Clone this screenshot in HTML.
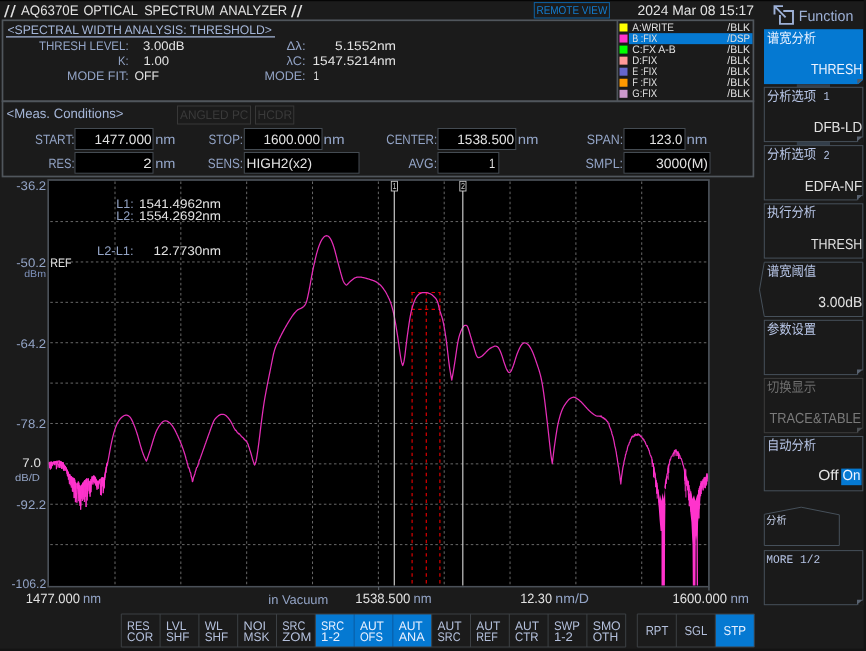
<!DOCTYPE html>
<html lang="zh">
<head>
<meta charset="utf-8">
<title>AQ6370E OPTICAL SPECTRUM ANALYZER</title>
<style>
html,body{margin:0;padding:0;background:#1b1b1b;}
body{width:866px;height:651px;overflow:hidden;position:relative;font-family:"Liberation Sans", "Noto Sans CJK SC", sans-serif;}
svg{position:absolute;left:0;top:0;display:block;filter:blur(0.35px);}
svg text{font-family:"Liberation Sans", "Noto Sans CJK SC", sans-serif;white-space:pre;}
</style>
</head>
<body>
<svg width="866" height="651" viewBox="0 0 866 651" text-rendering="geometricPrecision">
<rect x="0" y="0" width="866" height="651" fill="#1b1b1b"/>
<rect x="0.00" y="0.00" width="866.00" height="1.20" fill="#050505"/>
<rect x="863.70" y="0.00" width="2.30" height="651.00" fill="#141414"/>
<rect x="0.00" y="648.70" width="866.00" height="2.30" fill="#141414"/>
<g id="header">
<text x="21.00" y="14.55" font-size="13.83" fill="#e2e2e2" textLength="57.60" lengthAdjust="spacingAndGlyphs">AQ6370E</text>
<text x="83.50" y="14.55" font-size="13.83" fill="#e2e2e2" textLength="54.30" lengthAdjust="spacingAndGlyphs">OPTICAL</text>
<text x="144.20" y="14.55" font-size="13.83" fill="#e2e2e2" textLength="70.60" lengthAdjust="spacingAndGlyphs">SPECTRUM</text>
<text x="219.60" y="14.55" font-size="13.83" fill="#e2e2e2" textLength="67.60" lengthAdjust="spacingAndGlyphs">ANALYZER</text>
<text transform="translate(4.0,17.00) scale(1.45,1.2)" font-size="13.83" fill="#e2e2e2">/</text>
<text transform="translate(10.2,17.00) scale(1.45,1.2)" font-size="13.83" fill="#e2e2e2">/</text>
<text transform="translate(291.0,17.00) scale(1.45,1.2)" font-size="13.83" fill="#e2e2e2">/</text>
<text transform="translate(296.7,17.00) scale(1.45,1.2)" font-size="13.83" fill="#e2e2e2">/</text>
<rect x="534.30" y="2.60" width="75.10" height="15.40" fill="none" stroke="#0e62a4" stroke-width="1"/>
<text x="536.50" y="13.75" font-size="11.44" fill="#127ccf" textLength="70.80" lengthAdjust="spacingAndGlyphs">REMOTE VIEW</text>
<text x="637.50" y="14.55" font-size="13.83" fill="#e2e2e2" textLength="116.50" lengthAdjust="spacingAndGlyphs">2024 Mar 08 15:17</text>
</g>
<g id="analysis-panel">
<rect x="2.50" y="20.30" width="750.90" height="81.00" fill="none" stroke="#50565c" stroke-width="1.7"/>
<rect x="2.50" y="101.30" width="750.90" height="75.20" fill="none" stroke="#50565c" stroke-width="1.7"/>
<text x="7.50" y="33.55" font-size="12.48" fill="#a5b6d8" textLength="264.50" lengthAdjust="spacingAndGlyphs">&lt;SPECTRAL WIDTH ANALYSIS: THRESHOLD&gt;</text>
<line x1="6.00" y1="36.80" x2="275.00" y2="36.80" stroke="#a5b6d8" stroke-width="1.2"/>
<text x="39.00" y="49.55" font-size="12.48" fill="#93a4c6" textLength="89.60" lengthAdjust="spacingAndGlyphs">THRESH LEVEL:</text>
<text x="143.00" y="49.55" font-size="12.48" fill="#e2e2e2" textLength="41.50" lengthAdjust="spacingAndGlyphs">3.00dB</text>
<text x="118.00" y="64.55" font-size="12.48" fill="#93a4c6" textLength="10.60" lengthAdjust="spacingAndGlyphs">K:</text>
<text x="143.50" y="64.55" font-size="12.48" fill="#e2e2e2" textLength="25.50" lengthAdjust="spacingAndGlyphs">1.00</text>
<text x="67.00" y="79.55" font-size="12.48" fill="#93a4c6" textLength="61.60" lengthAdjust="spacingAndGlyphs">MODE FIT:</text>
<text x="134.50" y="79.55" font-size="12.48" fill="#e2e2e2" textLength="24.50" lengthAdjust="spacingAndGlyphs">OFF</text>
<text x="286.50" y="49.55" font-size="12.48" fill="#93a4c6" textLength="19.10" lengthAdjust="spacingAndGlyphs">Δλ:</text>
<text x="335.00" y="49.55" font-size="12.48" fill="#e2e2e2" textLength="61.00" lengthAdjust="spacingAndGlyphs">5.1552nm</text>
<text x="286.50" y="64.55" font-size="12.48" fill="#93a4c6" textLength="19.10" lengthAdjust="spacingAndGlyphs">λC:</text>
<text x="312.50" y="64.55" font-size="12.48" fill="#e2e2e2" textLength="83.50" lengthAdjust="spacingAndGlyphs">1547.5214nm</text>
<text x="264.50" y="79.55" font-size="12.48" fill="#93a4c6" textLength="41.10" lengthAdjust="spacingAndGlyphs">MODE:</text>
<text x="313.50" y="79.55" font-size="12.48" fill="#e2e2e2" textLength="5.50" lengthAdjust="spacingAndGlyphs">1</text>
</g>
<g id="trace-list">
<line x1="617.40" y1="20.30" x2="617.40" y2="101.30" stroke="#50565c" stroke-width="1.7"/>
<rect x="619.50" y="23.50" width="8.00" height="8.00" fill="#ffff00"/>
<text x="632.30" y="30.85" font-size="10.92" fill="#e2e2e2" textLength="41.60" lengthAdjust="spacingAndGlyphs">A:WRITE</text>
<text x="727.30" y="30.85" font-size="10.92" fill="#e2e2e2" textLength="22.70" lengthAdjust="spacingAndGlyphs">/BLK</text>
<rect x="629.00" y="33.15" width="123.50" height="11.00" fill="#0579d2"/>
<rect x="619.50" y="34.55" width="8.00" height="8.00" fill="#ff33cc"/>
<text x="632.30" y="41.90" font-size="10.92" fill="#e2e2e2" textLength="24.90" lengthAdjust="spacingAndGlyphs">B :FIX</text>
<text x="727.30" y="41.90" font-size="10.92" fill="#e2e2e2" textLength="22.70" lengthAdjust="spacingAndGlyphs">/DSP</text>
<rect x="619.50" y="45.60" width="8.00" height="8.00" fill="#00ff00"/>
<text x="632.30" y="52.95" font-size="10.92" fill="#e2e2e2" textLength="43.40" lengthAdjust="spacingAndGlyphs">C:FX A-B</text>
<text x="727.30" y="52.95" font-size="10.92" fill="#e2e2e2" textLength="22.70" lengthAdjust="spacingAndGlyphs">/BLK</text>
<rect x="619.50" y="56.65" width="8.00" height="8.00" fill="#ff9999"/>
<text x="632.30" y="64.00" font-size="10.92" fill="#e2e2e2" textLength="24.90" lengthAdjust="spacingAndGlyphs">D:FIX</text>
<text x="727.30" y="64.00" font-size="10.92" fill="#e2e2e2" textLength="22.70" lengthAdjust="spacingAndGlyphs">/BLK</text>
<rect x="619.50" y="67.70" width="8.00" height="8.00" fill="#6666cc"/>
<text x="632.30" y="75.05" font-size="10.92" fill="#e2e2e2" textLength="24.90" lengthAdjust="spacingAndGlyphs">E :FIX</text>
<text x="727.30" y="75.05" font-size="10.92" fill="#e2e2e2" textLength="22.70" lengthAdjust="spacingAndGlyphs">/BLK</text>
<rect x="619.50" y="78.75" width="8.00" height="8.00" fill="#ff9900"/>
<text x="632.30" y="86.10" font-size="10.92" fill="#e2e2e2" textLength="24.90" lengthAdjust="spacingAndGlyphs">F :FIX</text>
<text x="727.30" y="86.10" font-size="10.92" fill="#e2e2e2" textLength="22.70" lengthAdjust="spacingAndGlyphs">/BLK</text>
<rect x="619.50" y="89.80" width="8.00" height="8.00" fill="#cc99cc"/>
<text x="632.30" y="97.15" font-size="10.92" fill="#e2e2e2" textLength="24.90" lengthAdjust="spacingAndGlyphs">G:FIX</text>
<text x="727.30" y="97.15" font-size="10.92" fill="#e2e2e2" textLength="22.70" lengthAdjust="spacingAndGlyphs">/BLK</text>
</g>
<g id="meas-conditions">
<text x="6.50" y="118.05" font-size="13.52" fill="#a5b6d8" textLength="117.00" lengthAdjust="spacingAndGlyphs">&lt;Meas. Conditions&gt;</text>
<rect x="177.50" y="106.00" width="73.00" height="18.00" fill="none" stroke="#383838" stroke-width="1"/>
<text x="180.00" y="118.95" font-size="12.48" fill="#3a3a3a" textLength="68.30" lengthAdjust="spacingAndGlyphs">ANGLED PC</text>
<rect x="255.50" y="106.00" width="38.30" height="18.00" fill="none" stroke="#383838" stroke-width="1"/>
<text x="257.50" y="118.95" font-size="12.48" fill="#3a3a3a" textLength="34.70" lengthAdjust="spacingAndGlyphs">HCDR</text>
<text x="35.00" y="144.05" font-size="13.52" fill="#93a4c6" textLength="39.60" lengthAdjust="spacingAndGlyphs">START:</text>
<rect x="75.00" y="128.50" width="78.00" height="21.00" fill="#000" stroke="#444b52" stroke-width="1"/>
<text x="94.60" y="144.05" font-size="13.52" fill="#e2e2e2" textLength="57.00" lengthAdjust="spacingAndGlyphs">1477.000</text>
<text x="155.20" y="144.05" font-size="13.52" fill="#93a4c6" textLength="20.20" lengthAdjust="spacingAndGlyphs">nm</text>
<text x="48.50" y="167.75" font-size="13.52" fill="#93a4c6" textLength="26.10" lengthAdjust="spacingAndGlyphs">RES:</text>
<rect x="75.00" y="152.50" width="78.00" height="20.70" fill="#000" stroke="#444b52" stroke-width="1"/>
<text x="143.20" y="167.75" font-size="13.52" fill="#e2e2e2" textLength="8.40" lengthAdjust="spacingAndGlyphs">2</text>
<text x="155.20" y="167.75" font-size="13.52" fill="#93a4c6" textLength="20.20" lengthAdjust="spacingAndGlyphs">nm</text>
<text x="208.50" y="144.05" font-size="13.52" fill="#93a4c6" textLength="34.60" lengthAdjust="spacingAndGlyphs">STOP:</text>
<rect x="244.30" y="128.50" width="77.70" height="21.00" fill="#000" stroke="#444b52" stroke-width="1"/>
<text x="263.40" y="144.05" font-size="13.52" fill="#e2e2e2" textLength="56.60" lengthAdjust="spacingAndGlyphs">1600.000</text>
<text x="323.50" y="144.05" font-size="13.52" fill="#93a4c6" textLength="21.10" lengthAdjust="spacingAndGlyphs">nm</text>
<text x="207.80" y="167.75" font-size="13.52" fill="#93a4c6" textLength="35.30" lengthAdjust="spacingAndGlyphs">SENS:</text>
<rect x="244.30" y="152.50" width="114.70" height="20.70" fill="#000" stroke="#444b52" stroke-width="1"/>
<text x="246.60" y="167.75" font-size="13.52" fill="#e2e2e2" textLength="65.40" lengthAdjust="spacingAndGlyphs">HIGH2(x2)</text>
<text x="386.30" y="144.05" font-size="13.52" fill="#93a4c6" textLength="50.80" lengthAdjust="spacingAndGlyphs">CENTER:</text>
<rect x="438.00" y="128.50" width="77.80" height="21.00" fill="#000" stroke="#444b52" stroke-width="1"/>
<text x="457.20" y="144.05" font-size="13.52" fill="#e2e2e2" textLength="57.00" lengthAdjust="spacingAndGlyphs">1538.500</text>
<text x="517.70" y="144.05" font-size="13.52" fill="#93a4c6" textLength="20.70" lengthAdjust="spacingAndGlyphs">nm</text>
<text x="408.50" y="167.75" font-size="13.52" fill="#93a4c6" textLength="28.60" lengthAdjust="spacingAndGlyphs">AVG:</text>
<rect x="438.00" y="152.50" width="60.80" height="20.70" fill="#000" stroke="#444b52" stroke-width="1"/>
<text x="489.00" y="167.75" font-size="13.52" fill="#e2e2e2" textLength="6.20" lengthAdjust="spacingAndGlyphs">1</text>
<text x="586.80" y="144.05" font-size="13.52" fill="#93a4c6" textLength="36.30" lengthAdjust="spacingAndGlyphs">SPAN:</text>
<rect x="624.00" y="128.50" width="61.00" height="21.00" fill="#000" stroke="#444b52" stroke-width="1"/>
<text x="649.20" y="144.05" font-size="13.52" fill="#e2e2e2" textLength="33.30" lengthAdjust="spacingAndGlyphs">123.0</text>
<text x="686.50" y="144.05" font-size="13.52" fill="#93a4c6" textLength="20.90" lengthAdjust="spacingAndGlyphs">nm</text>
<text x="585.50" y="167.75" font-size="13.52" fill="#93a4c6" textLength="37.60" lengthAdjust="spacingAndGlyphs">SMPL:</text>
<rect x="624.00" y="152.50" width="86.00" height="20.70" fill="#000" stroke="#444b52" stroke-width="1"/>
<text x="656.00" y="167.75" font-size="13.52" fill="#e2e2e2" textLength="52.00" lengthAdjust="spacingAndGlyphs">3000(M)</text>
</g>
<g id="chart">
<rect x="48.20" y="180.00" width="660.70" height="406.60" fill="#000" stroke="#4a5058" stroke-width="1.7"/>
<rect x="49.00" y="181.00" width="659.00" height="404.60" fill="#000"/>
<line x1="115.00" y1="181.50" x2="115.00" y2="585.10" stroke="#747474" stroke-width="0.9" stroke-dasharray="2.533 2.533"/>
<line x1="180.84" y1="181.50" x2="180.84" y2="585.10" stroke="#747474" stroke-width="0.9" stroke-dasharray="2.533 2.533"/>
<line x1="246.68" y1="181.50" x2="246.68" y2="585.10" stroke="#747474" stroke-width="0.9" stroke-dasharray="2.533 2.533"/>
<line x1="312.52" y1="181.50" x2="312.52" y2="585.10" stroke="#747474" stroke-width="0.9" stroke-dasharray="2.533 2.533"/>
<line x1="378.36" y1="181.50" x2="378.36" y2="585.10" stroke="#747474" stroke-width="0.9" stroke-dasharray="2.533 2.533"/>
<line x1="444.20" y1="181.50" x2="444.20" y2="585.10" stroke="#747474" stroke-width="0.9" stroke-dasharray="2.533 2.533"/>
<line x1="510.04" y1="181.50" x2="510.04" y2="585.10" stroke="#747474" stroke-width="0.9" stroke-dasharray="2.533 2.533"/>
<line x1="575.88" y1="181.50" x2="575.88" y2="585.10" stroke="#747474" stroke-width="0.9" stroke-dasharray="2.533 2.533"/>
<line x1="641.72" y1="181.50" x2="641.72" y2="585.10" stroke="#747474" stroke-width="0.9" stroke-dasharray="2.533 2.533"/>
<line x1="50.30" y1="221.58" x2="706.40" y2="221.58" stroke="#747474" stroke-width="0.9" stroke-dasharray="2.533 2.533"/>
<line x1="50.30" y1="261.96" x2="706.40" y2="261.96" stroke="#747474" stroke-width="0.9" stroke-dasharray="2.533 2.533"/>
<line x1="50.30" y1="302.34" x2="706.40" y2="302.34" stroke="#747474" stroke-width="0.9" stroke-dasharray="2.533 2.533"/>
<line x1="50.30" y1="342.72" x2="706.40" y2="342.72" stroke="#747474" stroke-width="0.9" stroke-dasharray="2.533 2.533"/>
<line x1="50.30" y1="383.10" x2="706.40" y2="383.10" stroke="#747474" stroke-width="0.9" stroke-dasharray="2.533 2.533"/>
<line x1="50.30" y1="423.48" x2="706.40" y2="423.48" stroke="#747474" stroke-width="0.9" stroke-dasharray="2.533 2.533"/>
<line x1="50.30" y1="463.86" x2="706.40" y2="463.86" stroke="#747474" stroke-width="0.9" stroke-dasharray="2.533 2.533"/>
<line x1="50.30" y1="504.24" x2="706.40" y2="504.24" stroke="#747474" stroke-width="0.9" stroke-dasharray="2.533 2.533"/>
<line x1="50.30" y1="544.62" x2="706.40" y2="544.62" stroke="#747474" stroke-width="0.9" stroke-dasharray="2.533 2.533"/>
<text x="16.20" y="190.35" font-size="12.48" fill="#93a4c6" textLength="30.00" lengthAdjust="spacingAndGlyphs">-36.2</text>
<text x="16.20" y="266.65" font-size="12.48" fill="#93a4c6" textLength="30.00" lengthAdjust="spacingAndGlyphs">-50.2</text>
<text x="16.20" y="347.65" font-size="12.48" fill="#93a4c6" textLength="30.00" lengthAdjust="spacingAndGlyphs">-64.2</text>
<text x="16.20" y="427.65" font-size="12.48" fill="#93a4c6" textLength="30.00" lengthAdjust="spacingAndGlyphs">-78.2</text>
<text x="16.20" y="508.85" font-size="12.48" fill="#93a4c6" textLength="30.00" lengthAdjust="spacingAndGlyphs">-92.2</text>
<text x="11.50" y="587.55" font-size="12.48" fill="#93a4c6" textLength="34.70" lengthAdjust="spacingAndGlyphs">-106.2</text>
<text x="24.20" y="277.25" font-size="9.88" fill="#7f93bd" textLength="21.80" lengthAdjust="spacingAndGlyphs">dBm</text>
<text x="22.30" y="467.45" font-size="12.48" fill="#e2e2e2" textLength="18.50" lengthAdjust="spacingAndGlyphs">7.0</text>
<text x="15.00" y="480.65" font-size="10.19" fill="#93a4c6" textLength="25.00" lengthAdjust="spacingAndGlyphs">dB/D</text>
<text x="50.30" y="266.65" font-size="12.48" fill="#e2e2e2" textLength="21.30" lengthAdjust="spacingAndGlyphs">REF</text>
<text x="25.70" y="603.45" font-size="13.52" fill="#e2e2e2" textLength="54.30" lengthAdjust="spacingAndGlyphs">1477.000</text>
<text x="83.00" y="603.45" font-size="13.52" fill="#93a4c6" textLength="18.00" lengthAdjust="spacingAndGlyphs">nm</text>
<text x="268.30" y="603.65" font-size="12.90" fill="#93a4c6" textLength="60.00" lengthAdjust="spacingAndGlyphs">in Vacuum</text>
<text x="355.30" y="603.45" font-size="13.52" fill="#e2e2e2" textLength="55.00" lengthAdjust="spacingAndGlyphs">1538.500</text>
<text x="413.50" y="603.45" font-size="13.52" fill="#93a4c6" textLength="18.10" lengthAdjust="spacingAndGlyphs">nm</text>
<text x="520.20" y="603.45" font-size="13.52" fill="#e2e2e2" textLength="31.80" lengthAdjust="spacingAndGlyphs">12.30</text>
<text x="555.30" y="603.45" font-size="13.52" fill="#93a4c6" textLength="33.70" lengthAdjust="spacingAndGlyphs">nm/D</text>
<text x="672.50" y="603.45" font-size="13.52" fill="#e2e2e2" textLength="54.50" lengthAdjust="spacingAndGlyphs">1600.000</text>
<text x="730.40" y="603.45" font-size="13.52" fill="#93a4c6" textLength="18.60" lengthAdjust="spacingAndGlyphs">nm</text>
<line x1="378.60" y1="587.00" x2="378.60" y2="590.00" stroke="#5a6068" stroke-width="1.2"/>
<line x1="708.90" y1="587.00" x2="708.90" y2="590.50" stroke="#4a5058" stroke-width="1.7"/>
<text x="116.30" y="208.45" font-size="12.48" fill="#93a4c6" textLength="17.30" lengthAdjust="spacingAndGlyphs">L1:</text>
<text x="139.00" y="208.45" font-size="12.48" fill="#e2e2e2" textLength="82.00" lengthAdjust="spacingAndGlyphs">1541.4962nm</text>
<text x="116.30" y="220.25" font-size="12.48" fill="#93a4c6" textLength="17.30" lengthAdjust="spacingAndGlyphs">L2:</text>
<text x="139.00" y="220.25" font-size="12.48" fill="#e2e2e2" textLength="82.00" lengthAdjust="spacingAndGlyphs">1554.2692nm</text>
<text x="97.00" y="255.45" font-size="12.48" fill="#93a4c6" textLength="36.60" lengthAdjust="spacingAndGlyphs">L2-L1:</text>
<text x="153.50" y="255.45" font-size="12.48" fill="#e2e2e2" textLength="67.50" lengthAdjust="spacingAndGlyphs">12.7730nm</text>
<line x1="412.10" y1="291.90" x2="412.10" y2="585.60" stroke="#dc0000" stroke-width="1.2" stroke-dasharray="3.4 3.3"/>
<line x1="426.30" y1="291.90" x2="426.30" y2="585.60" stroke="#dc0000" stroke-width="1.2" stroke-dasharray="3.4 3.3"/>
<line x1="439.90" y1="291.90" x2="439.90" y2="585.60" stroke="#dc0000" stroke-width="1.2" stroke-dasharray="3.4 3.3"/>
<line x1="411.50" y1="292.50" x2="440.50" y2="292.50" stroke="#dc0000" stroke-width="1.2" stroke-dasharray="3.4 3.3"/>
<line x1="411.50" y1="309.40" x2="440.50" y2="309.40" stroke="#dc0000" stroke-width="1.2" stroke-dasharray="3.4 3.3"/>
<path d="M107.2,465.3 L107.6,463.2 L108.0,461.1 L108.4,459.0 L108.8,456.8 L109.2,454.6 L109.6,452.4 L110.0,450.2 L110.4,448.1 L110.8,446.0 L111.2,444.0 L111.6,442.1 L112.0,440.3 L112.4,438.6 L112.8,436.9 L113.2,435.3 L113.6,433.8 L114.0,432.4 L114.4,431.1 L114.8,429.8 L115.2,428.6 L115.6,427.5 L116.0,426.4 L116.4,425.5 L116.8,424.5 L117.2,423.7 L117.6,422.9 L118.0,422.1 L118.4,421.5 L118.8,420.8 L119.2,420.2 L119.6,419.7 L120.0,419.2 L120.4,418.7 L120.8,418.2 L121.2,417.8 L121.6,417.4 L122.0,417.1 L122.4,416.7 L122.8,416.4 L123.2,416.2 L123.6,415.9 L124.0,415.7 L124.4,415.5 L124.8,415.4 L125.2,415.3 L125.6,415.2 L126.0,415.2 L126.4,415.2 L126.8,415.2 L127.2,415.3 L127.6,415.4 L128.0,415.6 L128.4,415.8 L128.8,416.1 L129.2,416.4 L129.6,416.7 L130.0,417.2 L130.4,417.7 L130.8,418.2 L131.2,418.9 L131.6,419.6 L132.0,420.4 L132.4,421.2 L132.8,422.1 L133.2,423.0 L133.6,424.0 L134.0,424.9 L134.4,426.0 L134.8,427.0 L135.2,428.1 L135.6,429.2 L136.0,430.4 L136.4,431.6 L136.8,432.8 L137.2,434.0 L137.6,435.3 L138.0,436.7 L138.4,438.1 L138.8,439.5 L139.2,440.9 L139.6,442.4 L140.0,443.8 L140.4,445.3 L140.8,446.7 L141.2,448.0 L141.6,449.3 L142.0,450.6 L142.4,451.8 L142.8,452.9 L143.2,454.0 L143.6,455.1 L144.0,456.1 L144.4,457.0 L144.8,457.9 L145.2,458.8 L145.6,459.6 L146.0,460.4 L146.4,461.2 L146.8,460.1 L147.2,459.0 L147.6,457.8 L148.0,456.6 L148.4,455.5 L148.8,454.3 L149.2,453.1 L149.6,451.9 L150.0,450.7 L150.4,449.4 L150.8,448.2 L151.2,446.8 L151.6,445.5 L152.0,444.2 L152.4,442.9 L152.8,441.5 L153.2,440.2 L153.6,438.9 L154.0,437.7 L154.4,436.4 L154.8,435.2 L155.2,434.1 L155.6,433.0 L156.0,432.0 L156.4,431.1 L156.8,430.2 L157.2,429.4 L157.6,428.7 L158.0,427.9 L158.4,427.3 L158.8,426.6 L159.2,426.0 L159.6,425.4 L160.0,424.9 L160.4,424.3 L160.8,423.8 L161.2,423.3 L161.6,422.9 L162.0,422.5 L162.4,422.1 L162.8,421.8 L163.2,421.5 L163.6,421.3 L164.0,421.1 L164.4,421.0 L164.8,420.9 L165.2,420.8 L165.6,420.8 L166.0,420.9 L166.4,421.0 L166.8,421.1 L167.2,421.2 L167.6,421.4 L168.0,421.6 L168.4,421.9 L168.8,422.2 L169.2,422.5 L169.6,422.8 L170.0,423.1 L170.4,423.5 L170.8,424.0 L171.2,424.4 L171.6,424.9 L172.0,425.4 L172.4,426.0 L172.8,426.5 L173.2,427.1 L173.6,427.8 L174.0,428.4 L174.4,429.1 L174.8,429.8 L175.2,430.6 L175.6,431.4 L176.0,432.2 L176.4,433.1 L176.8,433.9 L177.2,434.8 L177.6,435.6 L178.0,436.5 L178.4,437.4 L178.8,438.3 L179.2,439.3 L179.6,440.2 L180.0,441.1 L180.4,442.1 L180.8,443.1 L181.2,444.1 L181.6,445.1 L182.0,446.1 L182.4,447.2 L182.8,448.3 L183.2,449.4 L183.6,450.6 L184.0,451.8 L184.4,453.0 L184.8,454.2 L185.2,455.6 L185.6,457.0 L186.0,458.7 L186.4,459.9 L186.8,460.9 L187.2,463.3 L187.6,464.3 L188.0,465.9 L188.4,467.8 L188.8,467.6 L189.2,468.3 L189.6,470.0 L190.0,471.9 L190.4,472.2 L190.8,473.4 L191.2,476.3 L191.6,477.4 L192.0,478.8 L192.4,481.6 L192.6,481.5 L193.0,480.4 L193.4,477.8 L193.8,476.7 L194.2,475.9 L194.6,474.8 L195.0,473.4 L195.4,471.3 L195.8,470.6 L196.2,469.0 L196.6,467.6 L197.0,467.3 L197.4,466.9 L197.8,465.8 L198.2,464.4 L198.6,463.8 L199.0,461.3 L199.4,460.0 L199.8,459.4 L200.2,458.4 L200.6,457.3 L201.0,456.1 L201.4,455.0 L201.8,453.9 L202.2,452.8 L202.6,451.6 L203.0,450.5 L203.4,449.4 L203.8,448.3 L204.2,447.2 L204.6,446.0 L205.0,444.9 L205.4,443.8 L205.8,442.7 L206.2,441.5 L206.6,440.4 L207.0,439.3 L207.4,438.2 L207.8,437.0 L208.2,435.9 L208.6,434.8 L209.0,433.7 L209.4,432.6 L209.8,431.5 L210.2,430.3 L210.6,429.2 L211.0,428.1 L211.4,427.1 L211.8,426.0 L212.2,424.9 L212.6,423.8 L213.0,422.8 L213.4,421.9 L213.8,421.0 L214.2,420.3 L214.6,419.7 L215.0,419.1 L215.4,418.6 L215.8,418.2 L216.2,417.8 L216.6,417.4 L217.0,417.0 L217.4,416.6 L217.8,416.3 L218.2,415.9 L218.6,415.6 L219.0,415.4 L219.4,415.1 L219.8,414.9 L220.2,414.7 L220.6,414.6 L221.0,414.4 L221.4,414.4 L221.8,414.3 L222.2,414.3 L222.6,414.3 L223.0,414.3 L223.4,414.4 L223.8,414.5 L224.2,414.6 L224.6,414.8 L225.0,415.0 L225.4,415.2 L225.8,415.5 L226.2,415.8 L226.6,416.2 L227.0,416.6 L227.4,417.0 L227.8,417.4 L228.2,417.9 L228.6,418.4 L229.0,418.9 L229.4,419.5 L229.8,420.0 L230.2,420.6 L230.6,421.2 L231.0,421.9 L231.4,422.6 L231.8,423.3 L232.2,424.2 L232.6,425.0 L233.0,425.8 L233.4,426.7 L233.8,427.5 L234.2,428.2 L234.6,428.9 L235.0,429.4 L235.4,430.4 L235.8,430.2 L236.2,430.6 L236.6,431.4 L237.0,432.0 L237.4,432.5 L237.8,432.8 L238.2,433.4 L238.6,433.4 L239.0,434.2 L239.4,433.8 L239.8,434.3 L240.2,435.0 L240.6,435.2 L241.0,436.0 L241.4,436.3 L241.8,436.6 L242.2,437.3 L242.6,437.5 L243.0,437.6 L243.4,438.1 L243.8,438.9 L244.2,439.4 L244.6,439.1 L245.0,440.2 L245.4,440.7 L245.8,440.6 L246.2,441.1 L246.6,441.2 L247.0,442.2 L247.4,442.9 L247.8,443.9 L248.2,444.4 L248.6,446.4 L249.0,447.1 L249.4,448.2 L249.8,449.9 L250.2,450.9 L250.6,452.1 L251.0,453.5 L251.4,455.0 L251.8,456.4 L252.2,457.9 L252.6,459.3 L253.0,460.6 L253.4,461.8 L253.8,462.9 L254.2,464.0 L254.6,465.0 L255.0,464.2 L255.4,463.2 L255.8,462.0 L256.2,460.4 L256.6,458.3 L257.0,455.8 L257.4,453.2 L257.8,450.5 L258.2,447.6 L258.6,444.6 L259.0,441.5 L259.4,438.3 L259.8,435.0 L260.2,431.7 L260.6,428.4 L261.0,425.1 L261.4,421.9 L261.8,418.8 L262.2,415.8 L262.6,412.8 L263.0,410.0 L263.4,407.2 L263.8,404.5 L264.2,401.9 L264.6,399.5 L265.0,397.2 L265.4,395.0 L265.8,392.8 L266.2,390.7 L266.6,388.6 L267.0,386.5 L267.4,384.4 L267.8,382.4 L268.2,380.4 L268.6,378.4 L269.0,376.4 L269.4,374.4 L269.8,372.5 L270.2,370.5 L270.6,368.5 L271.0,366.5 L271.4,364.4 L271.8,362.4 L272.2,360.3 L272.6,358.3 L273.0,356.3 L273.4,354.5 L273.8,352.8 L274.2,351.3 L274.6,349.9 L275.0,348.7 L275.4,347.5 L275.8,346.5 L276.2,345.5 L276.6,344.6 L277.0,343.8 L277.4,342.9 L277.8,342.1 L278.2,341.2 L278.6,340.4 L279.0,339.6 L279.4,338.7 L279.8,337.9 L280.2,337.1 L280.6,336.3 L281.0,335.5 L281.4,334.7 L281.8,333.9 L282.2,333.1 L282.6,332.4 L283.0,331.6 L283.4,330.9 L283.8,330.1 L284.2,329.4 L284.6,328.7 L285.0,328.0 L285.4,327.3 L285.8,326.6 L286.2,325.9 L286.6,325.2 L287.0,324.5 L287.4,323.8 L287.8,323.2 L288.2,322.5 L288.6,321.8 L289.0,321.2 L289.4,320.5 L289.8,319.9 L290.2,319.2 L290.6,318.6 L291.0,318.0 L291.4,317.4 L291.8,316.7 L292.2,316.2 L292.6,315.6 L293.0,315.0 L293.4,314.5 L293.8,314.0 L294.2,313.5 L294.6,313.0 L295.0,312.5 L295.4,312.1 L295.8,311.6 L296.2,311.2 L296.6,310.8 L297.0,310.5 L297.4,310.1 L297.8,309.8 L298.2,309.6 L298.6,309.4 L299.0,309.2 L299.4,309.0 L299.8,308.8 L300.2,308.7 L300.6,308.5 L301.0,308.3 L301.4,308.1 L301.8,307.9 L302.2,307.6 L302.6,307.4 L303.0,307.1 L303.4,306.7 L303.8,306.4 L304.2,305.9 L304.6,305.5 L305.0,304.9 L305.4,304.3 L305.8,303.5 L306.2,302.5 L306.6,301.3 L307.0,299.9 L307.4,298.3 L307.8,296.6 L308.2,294.7 L308.6,292.8 L309.0,290.8 L309.4,288.7 L309.8,286.5 L310.2,284.3 L310.6,282.0 L311.0,279.8 L311.4,277.6 L311.8,275.4 L312.2,273.4 L312.6,271.4 L313.0,269.5 L313.4,267.6 L313.8,265.7 L314.2,263.9 L314.6,262.1 L315.0,260.3 L315.4,258.6 L315.8,256.9 L316.2,255.3 L316.6,253.7 L317.0,252.3 L317.4,250.9 L317.8,249.6 L318.2,248.3 L318.6,247.1 L319.0,246.0 L319.4,244.9 L319.8,243.9 L320.2,243.0 L320.6,242.1 L321.0,241.3 L321.4,240.5 L321.8,239.8 L322.2,239.2 L322.6,238.6 L323.0,238.1 L323.4,237.6 L323.8,237.1 L324.2,236.8 L324.6,236.4 L325.0,236.2 L325.4,236.0 L325.8,235.8 L326.2,235.8 L326.6,235.7 L327.0,235.8 L327.4,235.9 L327.8,236.0 L328.2,236.2 L328.6,236.5 L329.0,236.8 L329.4,237.3 L329.8,237.8 L330.2,238.4 L330.6,239.0 L331.0,239.8 L331.4,240.6 L331.8,241.5 L332.2,242.5 L332.6,243.5 L333.0,244.5 L333.4,245.7 L333.8,246.9 L334.2,248.2 L334.6,249.6 L335.0,251.0 L335.4,252.6 L335.8,254.1 L336.2,255.6 L336.6,257.2 L337.0,258.8 L337.4,260.3 L337.8,261.9 L338.2,263.4 L338.6,264.9 L339.0,266.4 L339.4,267.9 L339.8,269.4 L340.2,270.9 L340.6,272.3 L341.0,273.8 L341.4,275.2 L341.8,276.6 L342.2,278.0 L342.6,279.3 L343.0,280.4 L343.4,281.3 L343.8,282.1 L344.2,282.8 L344.6,283.4 L345.0,283.9 L345.4,284.4 L345.8,284.8 L346.2,285.0 L346.6,285.0 L347.0,284.7 L347.4,284.4 L347.8,284.0 L348.2,283.5 L348.6,283.1 L349.0,282.7 L349.4,282.2 L349.8,281.9 L350.2,281.5 L350.6,281.2 L351.0,280.8 L351.4,280.5 L351.8,280.2 L352.2,279.8 L352.6,279.5 L353.0,279.2 L353.4,278.9 L353.8,278.6 L354.2,278.3 L354.6,278.1 L355.0,277.9 L355.4,277.7 L355.8,277.5 L356.2,277.4 L356.6,277.3 L357.0,277.2 L357.4,277.1 L357.8,277.0 L358.2,277.0 L358.6,277.0 L359.0,277.0 L359.4,277.0 L359.8,277.0 L360.2,277.0 L360.6,277.1 L361.0,277.2 L361.4,277.2 L361.8,277.3 L362.2,277.4 L362.6,277.5 L363.0,277.6 L363.4,277.7 L363.8,277.7 L364.2,277.8 L364.6,277.9 L365.0,278.0 L365.4,278.1 L365.8,278.2 L366.2,278.3 L366.6,278.4 L367.0,278.6 L367.4,278.7 L367.8,278.8 L368.2,278.9 L368.6,279.0 L369.0,279.1 L369.4,279.3 L369.8,279.4 L370.2,279.5 L370.6,279.7 L371.0,279.8 L371.4,279.9 L371.8,280.1 L372.2,280.2 L372.6,280.3 L373.0,280.5 L373.4,280.6 L373.8,280.8 L374.2,280.9 L374.6,281.1 L375.0,281.3 L375.4,281.4 L375.8,281.7 L376.2,281.9 L376.6,282.1 L377.0,282.4 L377.4,282.7 L377.8,283.0 L378.2,283.3 L378.6,283.6 L379.0,283.9 L379.4,284.2 L379.8,284.6 L380.2,284.9 L380.6,285.3 L381.0,285.7 L381.4,286.1 L381.8,286.6 L382.2,287.1 L382.6,287.6 L383.0,288.1 L383.4,288.7 L383.8,289.3 L384.2,289.8 L384.6,290.4 L385.0,291.0 L385.4,291.6 L385.8,292.3 L386.2,293.0 L386.6,293.7 L387.0,294.5 L387.4,295.2 L387.8,296.1 L388.2,296.9 L388.6,297.8 L389.0,298.6 L389.4,299.5 L389.8,300.5 L390.2,301.4 L390.6,302.5 L391.0,303.6 L391.4,304.9 L391.8,306.2 L392.2,307.6 L392.6,309.1 L393.0,310.7 L393.4,312.4 L393.8,314.2 L394.2,316.1 L394.6,318.1 L395.0,320.3 L395.4,322.6 L395.8,324.9 L396.2,327.4 L396.6,329.8 L397.0,332.3 L397.4,334.9 L397.8,337.4 L398.2,340.1 L398.6,342.9 L399.0,345.8 L399.4,348.7 L399.8,351.6 L400.2,354.4 L400.6,357.0 L401.0,359.3 L401.4,361.3 L401.8,362.9 L402.2,364.2 L402.6,365.3 L402.7,365.6 L403.1,364.6 L403.5,363.3 L403.9,361.7 L404.3,359.6 L404.7,356.9 L405.1,353.8 L405.5,350.5 L405.9,347.1 L406.3,343.8 L406.7,340.6 L407.1,337.6 L407.5,334.7 L407.9,331.8 L408.3,328.9 L408.7,326.1 L409.1,323.4 L409.5,320.8 L409.9,318.4 L410.3,316.1 L410.7,314.0 L411.1,312.1 L411.5,310.4 L411.9,308.8 L412.3,307.3 L412.7,306.0 L413.1,304.7 L413.5,303.6 L413.9,302.5 L414.3,301.5 L414.7,300.5 L415.1,299.6 L415.5,298.7 L415.9,297.9 L416.3,297.3 L416.7,296.7 L417.1,296.2 L417.5,295.7 L417.9,295.2 L418.3,294.8 L418.7,294.4 L419.1,294.1 L419.5,293.8 L419.9,293.6 L420.3,293.4 L420.7,293.3 L421.1,293.1 L421.5,292.9 L421.9,292.8 L422.3,292.7 L422.7,292.6 L423.1,292.5 L423.5,292.5 L423.9,292.5 L424.3,292.5 L424.7,292.5 L425.1,292.5 L425.5,292.6 L425.9,292.6 L426.3,292.7 L426.7,292.7 L427.1,292.8 L427.5,292.9 L427.9,293.0 L428.3,293.1 L428.7,293.2 L429.1,293.4 L429.5,293.5 L429.9,293.7 L430.3,293.8 L430.7,294.0 L431.1,294.2 L431.5,294.5 L431.9,294.8 L432.3,295.1 L432.7,295.5 L433.1,295.8 L433.5,296.2 L433.9,296.6 L434.3,297.0 L434.7,297.4 L435.1,297.8 L435.5,298.2 L435.9,298.7 L436.3,299.3 L436.7,300.0 L437.1,300.8 L437.5,301.7 L437.9,302.8 L438.3,304.3 L438.7,306.0 L439.1,307.8 L439.5,309.4 L439.9,310.8 L440.3,312.1 L440.7,313.3 L441.1,314.5 L441.5,315.8 L441.9,317.0 L442.3,318.4 L442.7,319.9 L443.1,321.6 L443.5,323.4 L443.9,325.5 L444.3,327.7 L444.7,330.0 L445.1,332.5 L445.5,335.1 L445.9,337.7 L446.3,340.5 L446.7,343.6 L447.1,346.9 L447.5,350.3 L447.9,353.8 L448.3,357.3 L448.7,360.7 L449.1,363.9 L449.5,366.8 L449.9,369.5 L450.3,372.0 L450.7,374.4 L451.1,376.6 L451.5,378.7 L451.8,380.1 L452.2,377.9 L452.6,375.6 L453.0,373.3 L453.4,371.0 L453.8,368.6 L454.2,366.2 L454.6,363.7 L455.0,361.0 L455.4,358.3 L455.8,355.5 L456.2,352.8 L456.6,350.0 L457.0,347.4 L457.4,344.9 L457.8,342.6 L458.2,340.5 L458.6,338.7 L459.0,337.0 L459.4,335.6 L459.8,334.3 L460.2,333.2 L460.6,332.1 L461.0,331.1 L461.4,330.2 L461.8,329.3 L462.2,328.5 L462.6,327.8 L463.0,327.1 L463.4,326.6 L463.8,326.1 L464.2,325.8 L464.6,325.5 L465.0,325.3 L465.4,325.3 L465.8,325.3 L466.2,325.3 L466.6,325.5 L467.0,325.9 L467.4,326.4 L467.8,327.2 L468.2,328.2 L468.6,329.5 L469.0,330.8 L469.4,332.2 L469.8,333.5 L470.2,334.9 L470.6,336.3 L471.0,337.7 L471.4,339.0 L471.8,340.4 L472.2,341.7 L472.6,343.1 L473.0,344.4 L473.4,345.7 L473.8,347.0 L474.2,348.4 L474.6,349.7 L475.0,350.9 L475.4,352.2 L475.8,353.5 L476.2,354.7 L476.6,355.7 L477.0,356.4 L477.4,357.0 L477.8,357.4 L478.2,357.6 L478.6,357.7 L479.0,357.6 L479.4,357.5 L479.8,357.3 L480.2,357.1 L480.6,356.9 L481.0,356.7 L481.4,356.5 L481.8,356.2 L482.2,355.9 L482.6,355.6 L483.0,355.2 L483.4,354.8 L483.8,354.4 L484.2,354.0 L484.6,353.6 L485.0,353.2 L485.4,352.8 L485.8,352.4 L486.2,351.9 L486.6,351.5 L487.0,351.1 L487.4,350.7 L487.8,350.3 L488.2,349.9 L488.6,349.6 L489.0,349.3 L489.4,348.9 L489.8,348.6 L490.2,348.4 L490.6,348.1 L491.0,347.9 L491.4,347.7 L491.8,347.4 L492.2,347.2 L492.6,347.0 L493.0,346.9 L493.4,346.7 L493.8,346.5 L494.2,346.3 L494.6,346.2 L495.0,346.2 L495.4,346.1 L495.8,346.1 L496.2,346.2 L496.6,346.4 L497.0,346.5 L497.4,346.8 L497.8,347.1 L498.2,347.5 L498.6,348.0 L499.0,348.7 L499.4,349.4 L499.8,350.2 L500.2,351.1 L500.6,352.1 L501.0,353.1 L501.4,354.1 L501.8,355.2 L502.2,356.4 L502.6,357.6 L503.0,358.9 L503.4,360.2 L503.8,361.5 L504.2,362.7 L504.6,363.9 L505.0,365.1 L505.4,366.1 L505.8,367.2 L506.2,368.2 L506.6,369.1 L507.0,369.9 L507.4,370.7 L507.8,371.3 L508.2,371.8 L508.6,372.2 L509.0,372.5 L509.4,372.6 L509.8,372.5 L510.2,372.2 L510.6,371.7 L511.0,371.1 L511.4,370.4 L511.8,369.5 L512.2,368.6 L512.6,367.6 L513.0,366.5 L513.4,365.4 L513.8,364.2 L514.2,363.0 L514.6,361.7 L515.0,360.4 L515.4,359.1 L515.8,357.8 L516.2,356.6 L516.6,355.4 L517.0,354.2 L517.4,353.2 L517.8,352.2 L518.2,351.2 L518.6,350.3 L519.0,349.4 L519.4,348.5 L519.8,347.7 L520.2,347.0 L520.6,346.3 L521.0,345.6 L521.4,345.0 L521.8,344.5 L522.2,344.1 L522.6,343.7 L523.0,343.4 L523.4,343.2 L523.8,343.0 L524.2,342.9 L524.6,342.9 L525.0,342.9 L525.4,343.0 L525.8,343.1 L526.2,343.3 L526.6,343.5 L527.0,343.7 L527.4,344.0 L527.8,344.4 L528.2,344.8 L528.6,345.2 L529.0,345.7 L529.4,346.2 L529.8,346.8 L530.2,347.4 L530.6,348.1 L531.0,348.8 L531.4,349.5 L531.8,350.3 L532.2,351.2 L532.6,352.1 L533.0,353.0 L533.4,354.0 L533.8,355.0 L534.2,356.1 L534.6,357.2 L535.0,358.3 L535.4,359.4 L535.8,360.6 L536.2,361.7 L536.6,362.9 L537.0,364.1 L537.4,365.3 L537.8,366.5 L538.2,367.6 L538.6,368.9 L539.0,370.1 L539.4,371.5 L539.8,372.9 L540.2,374.4 L540.6,375.9 L541.0,377.7 L541.4,379.5 L541.8,381.5 L542.2,383.6 L542.6,385.9 L543.0,388.4 L543.4,391.1 L543.8,393.9 L544.2,396.9 L544.6,399.9 L545.0,403.1 L545.4,406.4 L545.8,409.8 L546.2,413.1 L546.6,416.6 L547.0,420.0 L547.4,423.5 L547.8,426.9 L548.2,430.5 L548.6,434.1 L549.0,437.8 L549.4,441.5 L549.8,445.1 L550.2,448.6 L550.6,452.1 L551.0,455.3 L551.4,458.1 L551.8,460.7 L552.2,463.0 L552.3,463.6 L552.7,460.1 L553.1,456.7 L553.5,453.5 L553.9,450.4 L554.3,447.4 L554.7,444.5 L555.1,441.6 L555.5,438.9 L555.9,436.2 L556.3,433.6 L556.7,431.1 L557.1,428.7 L557.5,426.5 L557.9,424.5 L558.3,422.6 L558.7,420.9 L559.1,419.3 L559.5,417.8 L559.9,416.4 L560.3,415.0 L560.7,413.8 L561.1,412.6 L561.5,411.5 L561.9,410.5 L562.3,409.5 L562.7,408.6 L563.1,407.8 L563.5,407.0 L563.9,406.3 L564.3,405.6 L564.7,405.0 L565.1,404.4 L565.5,403.8 L565.9,403.2 L566.3,402.7 L566.7,402.1 L567.1,401.6 L567.5,401.1 L567.9,400.6 L568.3,400.1 L568.7,399.7 L569.1,399.3 L569.5,399.0 L569.9,398.7 L570.3,398.4 L570.7,398.2 L571.1,398.0 L571.5,397.8 L571.9,397.7 L572.3,397.5 L572.7,397.4 L573.1,397.3 L573.5,397.2 L573.9,397.2 L574.3,397.3 L574.7,397.3 L575.1,397.5 L575.5,397.7 L575.9,397.9 L576.3,398.2 L576.7,398.4 L577.1,398.7 L577.5,398.9 L577.9,399.2 L578.3,399.5 L578.7,399.8 L579.1,400.1 L579.5,400.5 L579.9,400.8 L580.3,401.2 L580.7,401.5 L581.1,401.9 L581.5,402.3 L581.9,402.7 L582.3,403.1 L582.7,403.5 L583.1,404.0 L583.5,404.4 L583.9,404.9 L584.3,405.3 L584.7,405.8 L585.1,406.2 L585.5,406.7 L585.9,407.1 L586.3,407.5 L586.7,408.0 L587.1,408.4 L587.5,408.9 L587.9,409.3 L588.3,409.7 L588.7,410.1 L589.1,410.5 L589.5,410.9 L589.9,411.3 L590.3,411.6 L590.7,412.0 L591.1,412.3 L591.5,412.7 L591.9,413.0 L592.3,413.3 L592.7,413.6 L593.1,413.9 L593.5,414.2 L593.9,414.5 L594.3,414.8 L594.7,415.0 L595.1,415.3 L595.5,415.5 L595.9,415.7 L596.3,415.9 L596.7,416.0 L597.1,416.1 L597.5,416.1 L597.9,416.2 L598.3,416.2 L598.7,416.2 L599.1,416.2 L599.5,416.2 L599.9,416.3 L600.3,416.2 L600.7,416.6 L601.1,415.9 L601.5,416.4 L601.9,417.1 L602.3,417.5 L602.7,417.4 L603.1,418.0 L603.5,417.7 L603.9,418.0 L604.3,418.9 L604.7,418.7 L605.1,419.6 L605.5,419.2 L605.9,419.9 L606.3,420.1 L606.7,421.1 L607.1,421.1 L607.5,421.6 L607.9,422.2 L608.3,423.3 L608.7,423.8 L609.1,424.9 L609.5,426.7 L609.9,427.3 L610.3,428.7 L610.7,429.0 L611.1,430.5 L611.5,431.4 L611.9,433.7 L612.3,434.7 L612.7,436.0 L613.1,437.2 L613.5,439.1 L613.9,440.9 L614.3,442.8 L614.7,445.4 L615.1,447.1 L615.5,448.5 L615.9,450.7 L616.3,452.6 L616.7,456.0 L617.1,457.6 L617.5,460.6 L617.9,463.1 L618.3,466.0 L618.7,467.5 L619.1,470.6 L619.5,473.6 L619.9,476.1 L620.3,480.2 L620.7,482.5 L620.8,484.0 L621.2,480.2 L621.6,476.3 L622.0,473.8 L622.4,470.8 L622.8,468.1 L623.2,466.1 L623.6,464.6 L624.0,461.8 L624.4,460.2 L624.8,458.5 L625.2,456.9 L625.6,454.4 L626.0,454.0 L626.4,451.5 L626.8,451.1 L627.2,449.6 L627.6,447.2 L628.0,446.1 L628.4,445.1 L628.8,444.9 L629.2,443.2 L629.6,442.1 L630.0,442.2 L630.4,439.9 L630.8,439.2 L631.2,438.6 L631.6,437.6 L632.0,436.6 L632.4,436.1 L632.8,436.9 L633.2,436.4 L633.6,436.5 L634.0,436.5 L634.4,434.7 L634.8,435.3 L635.2,435.6 L635.6,433.9 L636.0,434.8 L636.4,434.7 L636.8,435.4 L637.2,435.3 L637.6,434.0 L638.0,435.0 L638.4,434.0 L638.8,435.0 L639.2,435.1 L639.6,434.7 L640.0,435.7 L640.4,435.9 L640.8,436.6 L641.2,436.5 L641.6,436.7 L642.0,437.7 L642.4,438.4 L642.8,438.2 L643.2,439.9 L643.6,439.5 L644.0,439.8 L644.4,441.0 L644.8,441.8 L645.2,441.9 L645.6,443.6 L646.0,444.6 L646.4,445.1 L646.8,446.2 L647.2,445.6 L647.6,447.3 L648.0,448.2 L648.4,448.5 L648.8,450.3 L649.2,450.6 L649.6,452.8 L650.0,454.2 L650.4,455.1 L650.8,455.9 L651.2,457.0 L651.6,457.5 L652.0,460.0 L652.4,463.2 L652.8,463.6 L653.2,464.2 L653.6,467.4 L654.0,467.8 L654.4,471.0 L654.8,474.0 L655.2,477.6 L655.6,478.1 L656.0,481.1 L656.4,484.5 L656.8,485.9 L657.2,487.4 L657.6,489.5 L658.0,491.0 L658.4,493.8 L658.8,496.8 L659.2,502.8 L659.6,507.3 L659.6,505.6" fill="none" stroke="#e62eb8" stroke-width="1.25" stroke-linejoin="round"/>
<path d="M665.2,487.4 L665.6,481.9 L666.0,479.8 L666.4,478.7 L666.8,475.7 L667.2,473.7 L667.6,473.6 L668.0,468.7 L668.4,466.9 L668.8,465.1 L669.2,464.9 L669.6,461.8 L670.0,459.5 L670.4,460.0 L670.8,458.4 L671.2,456.8 L671.6,456.6 L672.0,456.3 L672.4,455.1 L672.8,454.5 L673.2,453.5 L673.6,453.7 L674.0,453.5 L674.4,450.8 L674.8,450.4 L675.2,452.0 L675.6,449.9 L676.0,451.4 L676.4,451.5 L676.8,451.8 L677.2,453.2 L677.6,453.3 L678.0,451.6 L678.4,453.9 L678.8,454.2 L679.2,455.2 L679.6,455.4 L680.0,455.9 L680.4,458.3 L680.8,458.5 L681.2,458.4 L681.6,459.6 L682.0,461.0 L682.4,461.9 L682.8,464.7 L683.2,465.0 L683.6,466.6 L684.0,468.4 L684.4,470.2 L684.8,473.7 L685.2,473.1 L685.6,475.7 L686.0,478.1 L686.4,478.5 L686.8,478.8 L687.2,482.5 L687.6,483.9 L688.0,482.5 L688.4,484.5 L688.8,486.7 L689.2,489.0 L689.6,489.0 L690.0,491.5 L690.4,491.9 L690.8,495.9 L691.2,497.3 L691.5,499.4" fill="none" stroke="#e62eb8" stroke-width="1.25" stroke-linejoin="round"/>
<path d="M699.3,492.9 L699.7,489.3 L700.1,486.9 L700.5,485.0 L700.9,483.6 L701.3,483.7 L701.7,482.8 L702.1,482.9 L702.5,482.4 L702.9,479.7 L703.3,480.2 L703.7,480.9 L704.1,479.0 L704.5,478.4 L704.9,477.4 L705.3,478.8 L705.7,479.4 L706.1,478.9 L706.5,475.5 L706.9,476.7 L707.3,475.1 L707.6,475.2" fill="none" stroke="#e62eb8" stroke-width="1.25" stroke-linejoin="round"/>
<path d="M49.2,462.9 L49.6,467.8 L50.0,464.0 L50.3,469.5 L50.7,463.4 L51.1,468.7 L51.5,461.8 L51.9,464.4 L52.2,464.6 L52.6,465.5 L53.0,464.2 L53.4,462.0 L53.8,461.9 L54.1,462.7 L54.5,462.0 L54.9,465.2 L55.3,461.2 L55.7,462.3 L56.0,461.1 L56.4,469.2 L56.8,463.0 L57.2,461.7 L57.6,463.1 L57.9,461.5 L58.3,461.8 L58.7,461.4 L59.1,460.8 L59.5,467.7 L59.8,460.8 L60.2,462.0 L60.6,464.8 L61.0,467.9 L61.4,461.6 L61.7,469.0 L62.1,462.5 L62.5,466.6 L62.9,462.3 L63.3,469.4 L63.6,464.4 L64.0,471.0 L64.4,467.2 L64.8,466.8 L65.2,466.1 L65.5,467.3 L65.9,467.3 L66.3,468.2 L66.7,468.9 L67.1,473.9 L67.4,470.3 L67.8,476.5 L68.2,472.0 L68.6,474.7 L69.0,475.9 L69.3,477.9 L69.7,474.3 L70.1,479.5 L70.5,477.5 L70.9,476.0 L71.2,483.1 L71.6,476.8 L72.0,480.5 L72.4,491.4 L72.8,477.5 L73.1,492.0 L73.5,478.4 L73.9,488.7 L74.3,478.4 L74.7,479.5 L75.0,480.4 L75.4,502.2 L75.8,482.9 L76.2,498.6 L76.6,493.6 L76.9,502.7 L77.3,484.1 L77.7,487.3 L78.1,483.0 L78.5,493.8 L78.8,482.6 L79.2,497.8 L79.6,490.3 L80.0,505.8 L80.4,486.5 L80.7,509.7 L81.1,485.5 L81.5,490.4 L81.9,486.6 L82.3,501.0 L82.6,483.4 L83.0,497.2 L83.4,483.4 L83.8,485.8 L84.2,481.3 L84.5,483.0 L84.9,480.1 L85.3,481.9 L85.7,483.9 L86.1,507.0 L86.4,478.8 L86.8,479.1 L87.2,489.1 L87.6,487.2 L88.0,478.8 L88.3,480.5 L88.7,480.2 L89.1,491.3 L89.5,481.3 L89.9,486.5 L90.2,481.8 L90.6,492.9 L91.0,479.3 L91.4,482.9 L91.8,480.1 L92.1,476.2 L92.5,477.3 L92.9,484.5 L93.3,476.7 L93.7,482.3 L94.0,475.7 L94.4,478.7 L94.8,476.4 L95.2,484.2 L95.6,477.7 L95.9,481.5 L96.3,483.5 L96.7,487.3 L97.1,484.5 L97.5,483.9 L97.8,481.0 L98.2,488.8 L98.6,481.8 L99.0,483.5 L99.4,480.6 L99.7,480.8 L100.1,479.4 L100.5,494.9 L100.9,485.5 L101.3,487.2 L101.6,478.1 L102.0,481.5 L102.4,477.3 L102.8,480.6 L103.2,481.5 L103.5,490.9 L103.9,478.3 L104.3,486.7 L104.7,476.9 L105.1,477.3 L105.4,471.1 L105.8,473.1 L106.2,466.8 L106.6,468.1 L107.0,463.5 L107.3,463.6" fill="none" stroke="#ff33cc" stroke-width="1.0" stroke-linejoin="bevel"/>
<path d="M49.2,462.3 L49.8,462.8 L50.3,461.8 L50.8,467.5 L51.4,461.8 L51.9,463.3 L52.5,464.2 L53.0,461.7 L53.6,462.2 L54.1,464.1 L54.7,461.3 L55.2,462.2 L55.8,462.6 L56.3,462.5 L56.9,462.6 L57.4,461.0 L58.0,460.9 L58.5,460.9 L59.1,461.3 L59.6,467.7 L60.2,461.7 L60.7,465.7 L61.3,461.7 L61.8,465.8 L62.4,462.0 L62.9,462.8 L63.5,464.1 L64.0,467.6 L64.6,465.2 L65.1,465.9 L65.7,466.9 L66.2,468.2 L66.8,469.1 L67.3,475.6 L67.9,471.2 L68.4,479.6 L69.0,476.7 L69.5,473.9 L70.1,475.0 L70.6,478.2 L71.2,476.1 L71.7,479.3 L72.3,483.7 L72.8,477.7 L73.4,480.0 L73.9,478.4 L74.5,480.7 L75.0,497.9 L75.6,482.3 L76.1,484.0 L76.7,485.3 L77.2,488.7 L77.8,482.5 L78.3,481.4 L78.9,483.9 L79.4,502.5 L80.0,486.5 L80.5,489.8 L81.1,488.6 L81.6,484.7 L82.2,485.6 L82.7,483.2 L83.3,484.0 L83.8,499.5 L84.4,480.7 L84.9,487.0 L85.5,482.5 L86.0,479.3 L86.6,478.9 L87.1,500.5 L87.7,487.9 L88.2,478.3 L88.8,481.4 L89.3,493.7 L89.9,481.9 L90.4,485.9 L91.0,479.3 L91.5,478.7 L92.1,477.2 L92.6,478.5 L93.2,477.7 L93.7,475.7 L94.3,476.0 L94.8,482.9 L95.4,478.2 L95.9,479.8 L96.5,479.3 L97.0,489.7 L97.6,481.2 L98.1,480.7 L98.7,484.5 L99.2,481.5 L99.8,480.1 L100.3,479.1 L100.9,478.5 L101.4,478.5 L102.0,477.2 L102.5,483.6 L103.1,477.6 L103.6,487.0 L104.2,477.4 L104.7,480.1 L105.3,472.7 L105.8,469.6 L106.4,466.7 L106.9,463.7 L107.5,462.3" fill="none" stroke="#ff33cc" stroke-width="1.0" stroke-linejoin="bevel"/>
<path d="M49.2,461.8 L49.7,468.1 L50.1,462.9 L50.6,465.9 L51.1,461.8 L51.5,467.7 L52.0,463.6 L52.5,465.4 L53.0,462.1 L53.4,463.5 L53.9,461.5 L54.4,464.6 L54.8,462.1 L55.3,461.9 L55.8,463.3 L56.2,463.4 L56.7,460.9 L57.2,461.3 L57.7,465.4 L58.1,467.6 L58.6,463.7 L59.1,466.3 L59.5,460.8 L60.0,463.7 L60.5,461.5 L60.9,462.4 L61.4,464.9 L61.9,464.9 L62.4,462.0 L62.8,468.5 L63.3,462.6 L63.8,470.4 L64.2,464.6 L64.7,469.5 L65.2,466.1 L65.6,470.7 L66.1,467.7 L66.6,469.0 L67.1,472.3 L67.5,472.9 L68.0,473.6 L68.5,474.7 L68.9,477.8 L69.4,483.9 L69.9,477.0 L70.3,485.3 L70.8,477.0 L71.3,487.6 L71.8,476.9 L72.2,486.0 L72.7,482.6 L73.2,482.4 L73.6,486.2 L74.1,498.1 L74.6,479.6 L75.0,489.4 L75.5,482.9 L76.0,492.5 L76.5,495.2 L76.9,493.0 L77.4,483.5 L77.9,484.3 L78.3,484.3 L78.8,501.1 L79.3,485.0 L79.7,497.3 L80.2,488.3 L80.7,505.9 L81.2,485.5 L81.6,498.7 L82.1,485.6 L82.6,495.0 L83.0,482.4 L83.5,485.5 L84.0,481.7 L84.4,502.0 L84.9,480.6 L85.4,496.8 L85.9,479.4 L86.3,482.3 L86.8,478.6 L87.3,496.4 L87.7,482.8 L88.2,485.0 L88.7,480.9 L89.1,490.3 L89.6,486.5 L90.1,496.7 L90.6,481.2 L91.0,491.9 L91.5,482.9 L92.0,482.7 L92.4,478.8 L92.9,480.6 L93.4,475.8 L93.8,478.2 L94.3,478.7 L94.8,478.1 L95.3,477.1 L95.7,485.5 L96.2,480.8 L96.7,484.3 L97.1,482.8 L97.6,480.9 L98.1,480.7 L98.5,485.2 L99.0,481.2 L99.5,482.9 L100.0,479.2 L100.4,484.7 L100.9,484.1 L101.4,495.4 L101.8,480.9 L102.3,486.3 L102.8,477.6 L103.2,493.2 L103.7,479.0 L104.2,488.3 L104.7,474.4 L105.1,473.5 L105.6,471.5 L106.1,472.2 L106.5,466.8 L107.0,465.8 L107.5,461.9" fill="none" stroke="#ff33cc" stroke-width="0.9" stroke-linejoin="bevel"/>
<path d="M653.8,468.8 L654.2,474.2 L654.6,471.7 L655.0,473.9 L655.4,479.3 L655.8,487.2 L656.2,482.0 L656.6,484.4 L657.0,485.5 L657.4,493.4 L657.8,489.5 L658.2,491.8 L658.6,494.8 L659.0,502.6" fill="none" stroke="#ff33cc" stroke-width="1.0" stroke-linejoin="bevel"/>
<path d="M664.9,488.2 L665.3,485.9 L665.7,483.1 L666.1,481.3 L666.5,478.1 L666.9,478.5 L667.3,476.2" fill="none" stroke="#ff33cc" stroke-width="1.0" stroke-linejoin="bevel"/>
<path d="M684.9,474.0 L685.3,477.6 L685.7,475.9 L686.1,477.7 L686.5,477.7 L686.9,484.6 L687.3,480.6 L687.7,490.3 L688.1,482.8 L688.5,497.8 L688.9,485.2 L689.3,506.2 L689.7,493.7 L690.1,497.6 L690.5,492.9 L690.9,510.2" fill="none" stroke="#ff33cc" stroke-width="1.0" stroke-linejoin="bevel"/>
<path d="M698.5,490.2 L698.9,518.4 L699.2,488.2 L699.6,505.8 L699.9,486.3 L700.3,490.2 L700.6,496.2 L701.0,487.3 L701.3,485.9 L701.7,489.0 L702.0,482.7 L702.4,486.8 L702.7,481.2 L703.1,490.4 L703.4,480.5 L703.8,482.2 L704.1,479.8 L704.5,481.8 L704.8,479.5 L705.2,488.2 L705.5,478.4 L705.9,478.2 L706.2,477.1 L706.6,484.0 L706.9,475.9 L707.3,478.7" fill="none" stroke="#ff33cc" stroke-width="1.0" stroke-linejoin="bevel"/>
<path d="M698.5,490.1 L699.0,508.7 L699.5,487.9 L700.0,491.3 L700.5,486.4 L701.0,494.0 L701.5,484.0 L702.0,488.3 L702.5,481.5 L703.0,483.9 L703.5,482.3 L704.0,483.6 L704.5,481.1 L705.0,487.6 L705.5,481.3 L706.0,485.7 L706.5,476.6 L707.0,477.3 L707.5,476.0" fill="none" stroke="#ff33cc" stroke-width="1.0" stroke-linejoin="bevel"/>
<path d="M656.5,482.2 L656.5,486.6 M653.9,466.5 L653.9,474.4 M657.2,482.7 L657.2,498.7 M658.2,492.1 L658.2,497.7 M655.0,473.5 L655.0,478.1 M653.5,463.4 L653.5,476.3 M652.2,459.5 L652.2,467.0 M656.5,480.2 L656.5,493.8 M653.5,463.1 L653.5,477.4 M668.2,468.0 L668.2,472.1 M668.2,465.4 L668.2,479.8 M666.4,477.6 L666.4,483.9 M668.8,464.0 L668.8,473.0 M665.4,483.6 L665.4,489.1 M678.8,453.1 L678.8,458.8 M678.5,452.5 L678.5,458.6 M676.3,449.4 L676.3,456.1 M675.0,450.2 L675.0,455.8 M678.6,452.9 L678.6,458.6 M678.9,453.3 L678.9,458.9 M677.6,451.9 L677.6,456.1 M673.8,451.9 L673.8,456.7 M684.6,469.4 L684.6,479.4 M684.7,469.7 L684.7,480.9 M688.4,482.0 L688.4,495.4 M686.6,476.8 L686.6,486.2 M685.9,469.4 L685.9,497.5 M688.5,480.7 L688.5,500.4 M685.2,468.5 L685.2,491.3 M685.1,470.7 L685.1,484.4 M690.9,491.3 L690.9,511.8 M704.0,477.2 L704.0,487.7 M706.6,473.4 L706.6,484.8 M701.1,482.8 L701.1,487.1 M701.8,480.7 L701.8,487.3 M700.9,480.9 L700.9,493.8 M706.9,474.1 L706.9,481.1 M704.9,477.0 L704.9,484.8 M707.2,473.2 L707.2,481.6 M701.4,481.6 L701.4,488.0 M704.1,478.2 L704.1,484.7" stroke="#ff33cc" stroke-width="0.9" fill="none"/>
<path d="M661.5,585.4 L661.5,531 L660.6,531 L659.6,520 L658.6,506 L658.0,497 L659.2,500 L660.2,495 L661.4,501 L662.6,493 L663.8,499 L665.0,489 L665.4,506 L665.1,531 L664.9,585.4 Z" fill="#ff33cc"/>
<path d="M692.8,585.4 L692.5,545 L692.2,539 L691.4,522 L690.5,514 L689.7,505 L689.0,497 L688.6,491 L690.2,496 L691.3,493 L692.6,499 L694,495 L695.4,501 L696.8,496 L698.2,493 L699.4,488 L700.6,494 L699.8,505 L699.0,514 L698.1,522 L697.8,539 L698.0,585.4 L696.7,585.4 L696.5,541 L696.0,535 L695.7,541 L695.5,585.4 Z" fill="#ff33cc"/>
<line x1="394.30" y1="181.00" x2="394.30" y2="585.60" stroke="#c8c8c8" stroke-width="1.2"/>
<rect x="391.30" y="181.30" width="6.20" height="9.70" fill="#000" stroke="#c8c8c8" stroke-width="0.9"/>
<text x="392.40" y="189.15" font-size="8.84" fill="#c8c8c8" textLength="4.00" lengthAdjust="spacingAndGlyphs">1</text>
<line x1="462.80" y1="181.00" x2="462.80" y2="585.60" stroke="#c8c8c8" stroke-width="1.2"/>
<rect x="459.80" y="181.30" width="6.20" height="9.70" fill="#000" stroke="#c8c8c8" stroke-width="0.9"/>
<text x="460.90" y="189.15" font-size="8.84" fill="#c8c8c8" textLength="4.00" lengthAdjust="spacingAndGlyphs">2</text>
</g>
<g id="toolbar">
<rect x="315.30" y="614.00" width="38.80" height="33.00" fill="#0579d2"/>
<rect x="354.10" y="614.00" width="38.80" height="33.00" fill="#0579d2"/>
<rect x="392.90" y="614.00" width="38.80" height="33.00" fill="#0579d2"/>
<line x1="121.30" y1="614.00" x2="121.30" y2="647.00" stroke="#3c4044" stroke-width="1"/>
<line x1="160.10" y1="614.00" x2="160.10" y2="647.00" stroke="#3c4044" stroke-width="1"/>
<line x1="198.90" y1="614.00" x2="198.90" y2="647.00" stroke="#3c4044" stroke-width="1"/>
<line x1="237.70" y1="614.00" x2="237.70" y2="647.00" stroke="#3c4044" stroke-width="1"/>
<line x1="276.50" y1="614.00" x2="276.50" y2="647.00" stroke="#3c4044" stroke-width="1"/>
<line x1="315.30" y1="614.00" x2="315.30" y2="647.00" stroke="#3c4044" stroke-width="1"/>
<line x1="354.10" y1="614.00" x2="354.10" y2="647.00" stroke="#0a5fa8" stroke-width="1"/>
<line x1="392.90" y1="614.00" x2="392.90" y2="647.00" stroke="#0a5fa8" stroke-width="1"/>
<line x1="431.70" y1="614.00" x2="431.70" y2="647.00" stroke="#3c4044" stroke-width="1"/>
<line x1="470.50" y1="614.00" x2="470.50" y2="647.00" stroke="#3c4044" stroke-width="1"/>
<line x1="509.30" y1="614.00" x2="509.30" y2="647.00" stroke="#3c4044" stroke-width="1"/>
<line x1="548.10" y1="614.00" x2="548.10" y2="647.00" stroke="#3c4044" stroke-width="1"/>
<line x1="586.90" y1="614.00" x2="586.90" y2="647.00" stroke="#3c4044" stroke-width="1"/>
<line x1="625.70" y1="614.00" x2="625.70" y2="647.00" stroke="#3c4044" stroke-width="1"/>
<line x1="121.30" y1="614.00" x2="625.70" y2="614.00" stroke="#3c4044" stroke-width="1"/>
<line x1="121.30" y1="647.00" x2="625.70" y2="647.00" stroke="#3c4044" stroke-width="1"/>
<text x="127.10" y="629.55" font-size="12.48" fill="#b4c0dc" textLength="22.50" lengthAdjust="spacingAndGlyphs">RES</text>
<text x="127.10" y="641.35" font-size="12.48" fill="#b4c0dc" textLength="26.00" lengthAdjust="spacingAndGlyphs">COR</text>
<text x="165.90" y="629.55" font-size="12.48" fill="#b4c0dc" textLength="20.50" lengthAdjust="spacingAndGlyphs">LVL</text>
<text x="165.90" y="641.35" font-size="12.48" fill="#b4c0dc" textLength="23.50" lengthAdjust="spacingAndGlyphs">SHF</text>
<text x="204.70" y="629.55" font-size="12.48" fill="#b4c0dc" textLength="18.00" lengthAdjust="spacingAndGlyphs">WL</text>
<text x="204.70" y="641.35" font-size="12.48" fill="#b4c0dc" textLength="23.50" lengthAdjust="spacingAndGlyphs">SHF</text>
<text x="243.50" y="629.55" font-size="12.48" fill="#b4c0dc" textLength="22.50" lengthAdjust="spacingAndGlyphs">NOI</text>
<text x="243.50" y="641.35" font-size="12.48" fill="#b4c0dc" textLength="26.00" lengthAdjust="spacingAndGlyphs">MSK</text>
<text x="282.30" y="629.55" font-size="12.48" fill="#b4c0dc" textLength="23.00" lengthAdjust="spacingAndGlyphs">SRC</text>
<text x="282.30" y="641.35" font-size="12.48" fill="#b4c0dc" textLength="29.00" lengthAdjust="spacingAndGlyphs">ZOM</text>
<text x="321.10" y="629.55" font-size="12.48" fill="#e8f0ff" textLength="23.00" lengthAdjust="spacingAndGlyphs">SRC</text>
<text x="321.10" y="641.35" font-size="12.48" fill="#e8f0ff" textLength="19.00" lengthAdjust="spacingAndGlyphs">1-2</text>
<text x="359.90" y="629.55" font-size="12.48" fill="#e8f0ff" textLength="24.00" lengthAdjust="spacingAndGlyphs">AUT</text>
<text x="359.90" y="641.35" font-size="12.48" fill="#e8f0ff" textLength="23.00" lengthAdjust="spacingAndGlyphs">OFS</text>
<text x="398.70" y="629.55" font-size="12.48" fill="#e8f0ff" textLength="24.00" lengthAdjust="spacingAndGlyphs">AUT</text>
<text x="398.70" y="641.35" font-size="12.48" fill="#e8f0ff" textLength="26.00" lengthAdjust="spacingAndGlyphs">ANA</text>
<text x="437.50" y="629.55" font-size="12.48" fill="#b4c0dc" textLength="24.00" lengthAdjust="spacingAndGlyphs">AUT</text>
<text x="437.50" y="641.35" font-size="12.48" fill="#b4c0dc" textLength="23.00" lengthAdjust="spacingAndGlyphs">SRC</text>
<text x="476.30" y="629.55" font-size="12.48" fill="#b4c0dc" textLength="24.00" lengthAdjust="spacingAndGlyphs">AUT</text>
<text x="476.30" y="641.35" font-size="12.48" fill="#b4c0dc" textLength="21.50" lengthAdjust="spacingAndGlyphs">REF</text>
<text x="515.10" y="629.55" font-size="12.48" fill="#b4c0dc" textLength="24.00" lengthAdjust="spacingAndGlyphs">AUT</text>
<text x="515.10" y="641.35" font-size="12.48" fill="#b4c0dc" textLength="23.50" lengthAdjust="spacingAndGlyphs">CTR</text>
<text x="553.90" y="629.55" font-size="12.48" fill="#b4c0dc" textLength="26.00" lengthAdjust="spacingAndGlyphs">SWP</text>
<text x="553.90" y="641.35" font-size="12.48" fill="#b4c0dc" textLength="19.00" lengthAdjust="spacingAndGlyphs">1-2</text>
<text x="592.70" y="629.55" font-size="12.48" fill="#b4c0dc" textLength="28.00" lengthAdjust="spacingAndGlyphs">SMO</text>
<text x="592.70" y="641.35" font-size="12.48" fill="#b4c0dc" textLength="25.50" lengthAdjust="spacingAndGlyphs">OTH</text>
<rect x="715.30" y="614.00" width="39.00" height="33.00" fill="#0579d2"/>
<line x1="637.30" y1="614.00" x2="637.30" y2="647.00" stroke="#3c4044" stroke-width="1"/>
<line x1="676.30" y1="614.00" x2="676.30" y2="647.00" stroke="#3c4044" stroke-width="1"/>
<line x1="715.30" y1="614.00" x2="715.30" y2="647.00" stroke="#3c4044" stroke-width="1"/>
<line x1="754.30" y1="614.00" x2="754.30" y2="647.00" stroke="#3c4044" stroke-width="1"/>
<line x1="637.30" y1="614.00" x2="754.30" y2="614.00" stroke="#3c4044" stroke-width="1"/>
<line x1="637.30" y1="647.00" x2="754.30" y2="647.00" stroke="#3c4044" stroke-width="1"/>
<text x="645.70" y="635.15" font-size="13.00" fill="#b4c0dc" textLength="22.60" lengthAdjust="spacingAndGlyphs">RPT</text>
<text x="684.50" y="635.15" font-size="13.00" fill="#b4c0dc" textLength="22.80" lengthAdjust="spacingAndGlyphs">SGL</text>
<text x="723.50" y="635.15" font-size="13.00" fill="#e8f0ff" textLength="22.50" lengthAdjust="spacingAndGlyphs">STP</text>
</g>
<g id="function-menu">
<path d="M783.3,11.05 L793,11.05 L793,23.85 L779.95,23.85 L779.95,15" fill="none" stroke="#9db0d6" stroke-width="1.9" stroke-linejoin="miter"/>
<path d="M783,6.1 L774.5,6.1 L774.5,14.4 M774.8,6.4 L785.6,17.3" fill="none" stroke="#9db0d6" stroke-width="1.9" stroke-linecap="butt"/>
<text x="798.70" y="21.15" font-size="14.77" fill="#9db0d6" textLength="54.70" lengthAdjust="spacingAndGlyphs">Function</text>
<rect x="764.00" y="29.20" width="99.10" height="54.90" fill="#0579d2"/>
<path d="M857.3,85.1 L864.0999999999999,79.1 L864.0999999999999,85.1 Z" fill="#1b1b1b"/>
<path d="M857.3,79.1 L863.0999999999999,79.1 L857.3,84.1 Z" fill="#555c64"/>
<rect x="796.80" y="84.20" width="33.20" height="3.00" fill="#333e4a"/>
<text x="766.90" y="43.15" font-size="13.83" fill="#e8f0ff" textLength="49.30" lengthAdjust="spacingAndGlyphs" style='font-family:"Liberation Sans", "Noto Sans CJK SC", sans-serif'>谱宽分析</text>
<text x="811.00" y="74.45" font-size="14.56" fill="#f0f4ff" textLength="51.20" lengthAdjust="spacingAndGlyphs">THRESH</text>
<rect x="764.30" y="87.30" width="98.50" height="54.30" fill="#1a1a1a" stroke="#46505a" stroke-width="1"/>
<path d="M857.0,142.6 L863.8,136.6 L863.8,142.6 Z" fill="#1b1b1b"/>
<path d="M857.0,136.6 L862.8,136.6 L857.0,141.6 Z" fill="#586270"/>
<rect x="796.80" y="142.00" width="33.20" height="3.00" fill="#333e4a"/>
<text x="766.90" y="100.95" font-size="13.83" fill="#b7c5e6" textLength="49.30" lengthAdjust="spacingAndGlyphs" style='font-family:"Liberation Sans", "Noto Sans CJK SC", sans-serif'>分析选项</text>
<text x="823.40" y="100.45" font-size="12.27" fill="#b7c5e6" textLength="6.20" lengthAdjust="spacingAndGlyphs" style='font-family:"Liberation Mono", monospace'>1</text>
<text x="813.70" y="132.25" font-size="14.56" fill="#e2e2e2" textLength="48.50" lengthAdjust="spacingAndGlyphs">DFB-LD</text>
<rect x="764.30" y="145.60" width="98.50" height="54.30" fill="#1a1a1a" stroke="#46505a" stroke-width="1"/>
<path d="M857.0,200.89999999999998 L863.8,194.89999999999998 L863.8,200.89999999999998 Z" fill="#1b1b1b"/>
<path d="M857.0,194.89999999999998 L862.8,194.89999999999998 L857.0,199.89999999999998 Z" fill="#586270"/>
<text x="766.90" y="159.25" font-size="13.83" fill="#b7c5e6" textLength="49.30" lengthAdjust="spacingAndGlyphs" style='font-family:"Liberation Sans", "Noto Sans CJK SC", sans-serif'>分析选项</text>
<text x="823.40" y="158.75" font-size="12.27" fill="#b7c5e6" textLength="6.20" lengthAdjust="spacingAndGlyphs" style='font-family:"Liberation Mono", monospace'>2</text>
<text x="804.80" y="190.55" font-size="14.56" fill="#e2e2e2" textLength="57.40" lengthAdjust="spacingAndGlyphs">EDFA-NF</text>
<rect x="764.30" y="203.80" width="98.50" height="54.30" fill="#1a1a1a" stroke="#46505a" stroke-width="1"/>
<text x="766.90" y="217.45" font-size="13.83" fill="#b7c5e6" textLength="49.30" lengthAdjust="spacingAndGlyphs" style='font-family:"Liberation Sans", "Noto Sans CJK SC", sans-serif'>执行分析</text>
<text x="811.00" y="248.75" font-size="14.56" fill="#e2e2e2" textLength="51.20" lengthAdjust="spacingAndGlyphs">THRESH</text>
<path d="M764.3,262.2 L862.8,262.2 L862.8,316.5 L764.3,316.5 L759.5,289.85 Z" fill="#1a1a1a" stroke="#46505a" stroke-width="1"/>
<text x="766.90" y="275.85" font-size="13.83" fill="#b7c5e6" textLength="49.30" lengthAdjust="spacingAndGlyphs" style='font-family:"Liberation Sans", "Noto Sans CJK SC", sans-serif'>谱宽阈值</text>
<text x="818.30" y="307.15" font-size="14.56" fill="#e2e2e2" textLength="43.90" lengthAdjust="spacingAndGlyphs">3.00dB</text>
<rect x="764.30" y="320.30" width="98.50" height="54.30" fill="#1a1a1a" stroke="#46505a" stroke-width="1"/>
<path d="M857.0,375.6 L863.8,369.6 L863.8,375.6 Z" fill="#1b1b1b"/>
<path d="M857.0,369.6 L862.8,369.6 L857.0,374.6 Z" fill="#586270"/>
<text x="766.90" y="333.95" font-size="13.83" fill="#b7c5e6" textLength="49.30" lengthAdjust="spacingAndGlyphs" style='font-family:"Liberation Sans", "Noto Sans CJK SC", sans-serif'>参数设置</text>
<rect x="764.30" y="378.40" width="98.50" height="54.30" fill="#1a1a1a" stroke="#3c3c3c" stroke-width="1"/>
<path d="M857.0,433.7 L863.8,427.7 L863.8,433.7 Z" fill="#1b1b1b"/>
<path d="M857.0,427.7 L862.8,427.7 L857.0,432.7 Z" fill="#4a4e52"/>
<text x="766.90" y="392.05" font-size="13.83" fill="#6e6e6e" textLength="49.30" lengthAdjust="spacingAndGlyphs" style='font-family:"Liberation Sans", "Noto Sans CJK SC", sans-serif'>切换显示</text>
<text x="769.40" y="423.35" font-size="14.56" fill="#7a7a7a" textLength="91.80" lengthAdjust="spacingAndGlyphs">TRACE&amp;TABLE</text>
<rect x="764.30" y="436.50" width="98.50" height="54.30" fill="#1a1a1a" stroke="#46505a" stroke-width="1"/>
<text x="766.90" y="450.15" font-size="13.83" fill="#b7c5e6" textLength="49.30" lengthAdjust="spacingAndGlyphs" style='font-family:"Liberation Sans", "Noto Sans CJK SC", sans-serif'>自动分析</text>
<rect x="841.20" y="468.60" width="20.40" height="16.60" fill="#0579d2"/>
<text x="818.20" y="480.35" font-size="14.56" fill="#e2e2e2" textLength="20.40" lengthAdjust="spacingAndGlyphs">Off</text>
<text x="842.60" y="480.35" font-size="14.56" fill="#f0f4ff" textLength="17.90" lengthAdjust="spacingAndGlyphs">On</text>
<path d="M764.3,545.5 L764.3,514.3 L801.2,507.2 L839.3,514.8 L839.3,545.5 Z" fill="#1a1a1a" stroke="#46505a" stroke-width="1"/>
<text x="766.30" y="524.15" font-size="10.92" fill="#c5d0ea" textLength="20.20" lengthAdjust="spacingAndGlyphs" style='font-family:"Liberation Sans", "Noto Sans CJK SC", sans-serif'>分析</text>
<rect x="764.30" y="550.60" width="98.50" height="54.10" fill="#1a1a1a" stroke="#46505a" stroke-width="1"/>
<path d="M857.0,605.7 L863.8,599.7 L863.8,605.7 Z" fill="#1b1b1b"/>
<path d="M857.0,599.7 L862.8,599.7 L857.0,604.7 Z" fill="#586270"/>
<text x="766.30" y="563.45" font-size="11.75" fill="#b7c5e6" textLength="54.00" lengthAdjust="spacingAndGlyphs" style='font-family:"Liberation Mono", monospace'>MORE 1/2</text>
</g>
</svg>
</body>
</html>
